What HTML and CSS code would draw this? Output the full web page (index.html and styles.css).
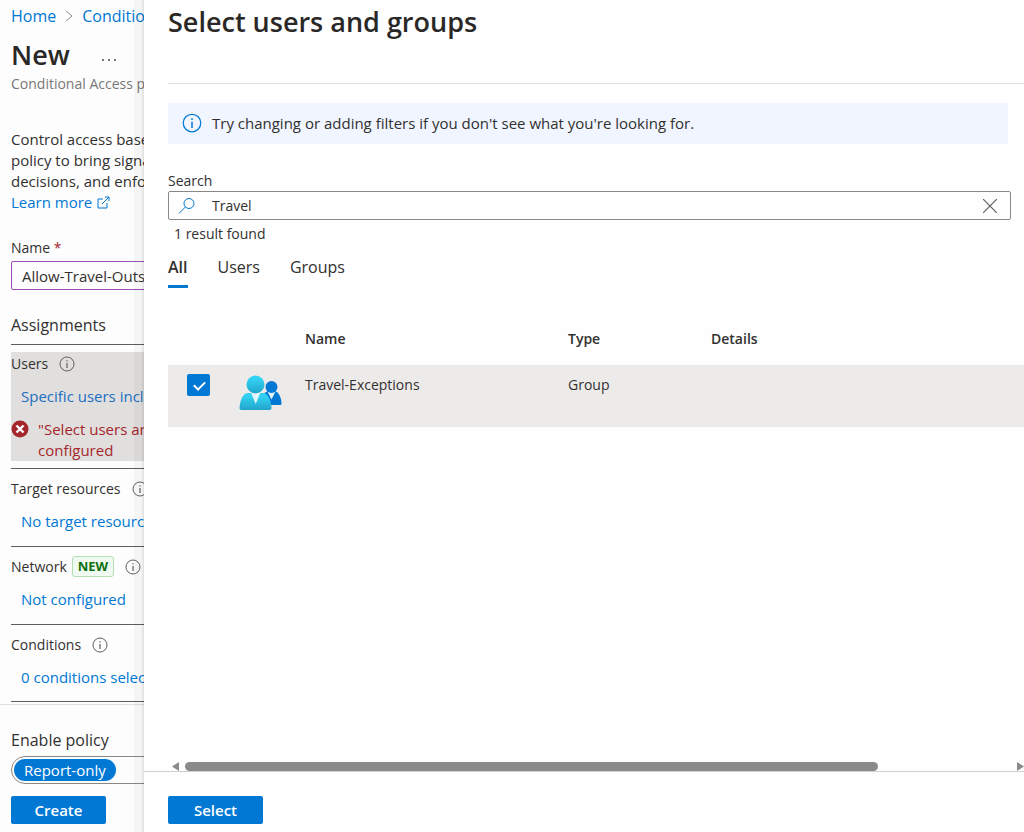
FILE: index.html
```html
<!DOCTYPE html>
<html lang="en">
<head>
    <meta charset="UTF-8">
    <meta name="viewport" content="width=device-width, initial-scale=1.0">
    <title>New - Conditional Access policy</title>
    <link rel="stylesheet" href="styles.css">
</head>
<body>
    <svg class="sprite" aria-hidden="true">
        <symbol id="info" viewBox="0 0 16 16">
            <circle cx="8" cy="8" r="7" fill="none" stroke="currentColor"/>
            <path d="M8 7v5M8 4.2v1.3" fill="none" stroke="currentColor" stroke-width="1.2"/>
        </symbol>
    </svg>

    <div class="policy">
        <div class="policy-body">
            <nav class="breadcrumb">
                <a href="#">Home</a>
                <svg width="8" height="12" viewBox="0 0 8 12"><path d="M1 1l6 5-6 5" fill="none" stroke="#8a8886"/></svg>
                <a href="#">Conditional Access</a>
            </nav>
            <div class="title-row">
                <h1>New</h1>
                <button class="more" type="button" aria-label="More">
                    <svg width="14" height="2" viewBox="0 0 14 2"><path d="M0 0h2v2H0zM6 0h2v2H6zM12 0h2v2h-2z" fill="#797775"/></svg>
                </button>
            </div>
            <p class="subtitle">Conditional Access policy</p>

            <p class="intro">Control access based on<br>policy to bring signals<br>decisions, and enforce<br>
                <a href="#">Learn more <svg width="13" height="13" viewBox="0 0 13 13"><path d="M6 3H1v9h9V7M8 1h4v4M12 1L5 8" fill="none" stroke="currentColor"/></svg></a>
            </p>

            <label for="policyName">Name <span class="required">*</span></label>
            <input class="name-input" type="text" id="policyName" value="Allow-Travel-Outside">

            <h2>Assignments</h2>
            <div class="section section-users">
                <div class="users-box">
                    <div class="section-label">Users <svg class="info"><use href="#info"/></svg></div>
                    <a href="#">Specific users included</a>
                    <div class="error">
                        <svg width="18" height="18" viewBox="0 0 18 18"><circle cx="9" cy="9" r="8.5" fill="#a4262c"/><path d="M5.5 5.5l7 7M12.5 5.5l-7 7" stroke="#fff" stroke-width="2.4"/></svg>
                        <p>"Select users and<br>configured</p>
                    </div>
                </div>
            </div>
            <div class="section">
                <div class="section-label">Target resources <svg class="info"><use href="#info"/></svg></div>
                <a href="#">No target resources</a>
            </div>
            <div class="section">
                <div class="section-label">Network <span class="badge">NEW</span> <svg class="info"><use href="#info"/></svg></div>
                <a href="#">Not configured</a>
            </div>
            <div class="section">
                <div class="section-label">Conditions <svg class="info"><use href="#info"/></svg></div>
                <a href="#">0 conditions selected</a>
            </div>
        </div>
        <div class="policy-footer">
            <div class="enable-label">Enable policy</div>
            <div class="toggle">
                <button type="button" class="active">Report-only</button>
            </div>
            <button class="primary" type="button">Create</button>
        </div>
    </div>

    <div class="panel">
        <div class="panel-body">
            <header><h1>Select users and groups</h1></header>
            <div class="message">
                <svg class="message-icon"><use href="#info"/></svg>
                <span>Try changing or adding filters if you don't see what you're looking for.</span>
            </div>

            <label for="search">Search</label>
            <div class="search-box">
                <svg width="18" height="18" viewBox="0 0 18 18"><circle cx="11" cy="6.5" r="5" fill="none" stroke="#0078d4"/><path d="M7.4 10L1 16.4" stroke="#0078d4"/></svg>
                <input type="text" id="search" value="Travel">
                <button type="button" aria-label="Clear">
                    <svg width="14" height="14" viewBox="0 0 14 14"><path d="M0 0l14 14M14 0L0 14" stroke="#605e5c" stroke-width="1.2"/></svg>
                </button>
            </div>
            <p class="result">1 result found</p>

            <div class="tabs" role="tablist">
                <button type="button" role="tab" aria-selected="true" class="active">All</button>
                <button type="button" role="tab" aria-selected="false">Users</button>
                <button type="button" role="tab" aria-selected="false">Groups</button>
            </div>

            <table>
                <thead>
                    <tr>
                        <th class="col-check"></th>
                        <th class="col-icon"></th>
                        <th class="col-name">Name</th>
                        <th class="col-type">Type</th>
                        <th>Details</th>
                    </tr>
                </thead>
                <tbody>
                    <tr>
                        <td class="col-check"><input type="checkbox" aria-label="Travel-Exceptions" checked></td>
                        <td>
                            <svg class="group-icon" width="44" height="36" viewBox="0 0 44 36">
                                <defs>
                                    <linearGradient id="head" x1="0" y1="0" x2="0" y2="1">
                                        <stop offset="0.2" stop-color="#32d0f2"/>
                                        <stop offset="1" stop-color="#22a5cb"/>
                                    </linearGradient>
                                </defs>
                                <path d="M24 30v-8c1-4 3-6 6-6h5c4 0 7 5 7.500 12 0 1.500-.5 2-1.500 2z" fill="#0078d4"/>
                                <path d="M28.500 16.500h8l-4 8z" fill="#e3f2fc"/>
                                <circle cx="32.500" cy="12" r="6" fill="#0078d4"/>
                                <path d="M2.500 35C1 35 .5 34.200.5 33 1 25 4 18 9 18h15c5 0 8 7 8.500 15 0 1.200-.8 2-2 2z" fill="url(#head)"/>
                                <path d="M12 17.500h9.500L16.700 29z" fill="#e3f7fd"/>
                                <circle cx="16.500" cy="9.500" r="9" fill="url(#head)"/>
                            </svg>
                        </td>
                        <td>Travel-Exceptions</td>
                        <td>Group</td>
                        <td></td>
                    </tr>
                </tbody>
            </table>
        </div>
        <div class="scrollbar">
            <svg width="7" height="9" viewBox="0 0 7 9"><path d="M7 0v9L0 4.500z" fill="#8a8a8a"/></svg>
            <div class="thumb"></div>
            <svg width="7" height="9" viewBox="0 0 7 9"><path d="M0 0v9l7-4.500z" fill="#8a8a8a"/></svg>
        </div>
        <div class="panel-footer">
            <button class="primary" type="button">Select</button>
        </div>
    </div>
</body>
</html>
```
FILE: styles.css
```css
* {
    box-sizing: border-box;
}
body {
    margin: 0;
    height: 100vh;
    display: flex;
    overflow: hidden;
    font-family: "Open Sans", "Noto Sans", sans-serif;
    font-size: 15px;
    line-height: 21px;
    color: #323130;
    background-color: #fdfdfd;
}
h1, h2, p {
    margin: 0;
}
h1 {
    font-size: 27px;
    line-height: 36px;
    font-weight: 600;
    color: #292827;
}
a {
    color: #0078d4;
    text-decoration: none;
}
label {
    display: block;
    font-size: 14px;
}
button, input {
    font: inherit;
    color: inherit;
}
button {
    padding: 0;
    border: none;
    background: none;
    cursor: pointer;
}
.sprite {
    display: none;
}
.primary {
    display: block;
    width: 95px;
    height: 28px;
    border-radius: 2px;
    background-color: #0078d4;
    color: #fff;
    font-weight: 600;
}

/* policy blade on the left, partly covered by the panel */
.policy {
    flex: 0 0 144px;
    display: flex;
    flex-direction: column;
    overflow: hidden;
    white-space: nowrap;
    position: relative;
}
.policy::after {
    content: "";
    position: absolute;
    top: 0;
    right: 0;
    bottom: 0;
    width: 10px;
    background: linear-gradient(to right, rgba(0,0,0,0.03) 70%, rgba(0,0,0,0.12));
}
.policy-body {
    flex: 1;
    width: 300px;
    padding: 5px 11px 0;
}
.breadcrumb {
    display: flex;
    align-items: center;
    gap: 9px;
    font-size: 16px;
    line-height: 22px;
}
.title-row {
    display: flex;
    align-items: center;
    gap: 32px;
    margin-top: 10px;
}
.more {
    line-height: 12px;
}
.subtitle {
    font-size: 14px;
    color: #797775;
}
.intro {
    margin: 35px 0 24px;
}
.intro svg {
    margin-left: 1px;
    vertical-align: -1px;
}
.required {
    color: #a4262c;
}
.name-input {
    display: block;
    width: 100%;
    height: 29px;
    margin-top: 3px;
    padding: 0 10px;
    border: 1px solid #9b4fb5;
    border-radius: 2px;
    background: none;
}
h2 {
    margin: 24px 0 8px;
    font-size: 16px;
    line-height: 22px;
    font-weight: 400;
}
.section {
    display: flex;
    flex-direction: column;
    gap: 12px;
    border-top: 1px solid #605e5c;
    padding: 9px 0 14px;
}
.section:last-child {
    border-bottom: 1px solid #605e5c;
    padding-bottom: 13px;
}
.section a {
    padding-left: 10px;
}
.section-label {
    display: flex;
    align-items: center;
    height: 21px;
    font-size: 14px;
}
.section-users {
    padding: 7px 0;
}
.users-box {
    display: flex;
    flex-direction: column;
    gap: 12px;
    padding-top: 1px;
    background-color: #e1dfdd;
}
.users-box a {
    color: #1b6ec2;
}
.info {
    width: 16px;
    height: 16px;
    margin-left: 11px;
    color: #605e5c;
}
.badge {
    margin-left: 5px;
    padding: 0 5px;
    border: 1px solid #b4deb4;
    border-radius: 3px;
    background-color: #f1faf1;
    color: #0e700e;
    font-size: 13px;
    line-height: 19px;
    font-weight: 700;
}
.error {
    display: flex;
    gap: 9px;
    color: #a4262c;
}
.error svg {
    margin-top: 1px;
}
.policy-footer {
    width: 300px;
    height: 128px;
    padding: 24px 11px 0;
    border-top: 1px solid #e1dfdd;
}
.enable-label {
    font-size: 16px;
    line-height: 22px;
}
.toggle {
    height: 28px;
    margin: 5px 0 12px;
    padding: 2px;
    border: 1px solid #8a8886;
    border-radius: 14px;
}
.toggle .active {
    display: block;
    height: 22px;
    padding: 0 10px;
    border-radius: 11px;
    background-color: #0078d4;
    color: #fff;
}

/* select users and groups */
.panel {
    flex: 1;
    min-width: 0;
    display: flex;
    flex-direction: column;
    background-color: #fefefe;
}
.panel-body {
    flex: 1;
    padding-left: 24px;
}
.panel header {
    height: 84px;
    padding-top: 4px;
    border-bottom: 1px solid #e1dfdd;
}
.message {
    display: flex;
    gap: 10px;
    height: 41px;
    margin: 19px 16px 26px 0;
    padding: 10px 0 0 14px;
    background-color: #f0f5ff;
}
.message-icon {
    width: 20px;
    height: 20px;
    color: #0078d4;
}
.search-box {
    display: flex;
    align-items: center;
    height: 29px;
    margin-right: 13px;
    padding: 0 13px 0 9px;
    border: 1px solid #8a8886;
    border-radius: 2px;
}
.search-box input {
    flex: 1;
    min-width: 0;
    height: 27px;
    padding: 0 16px;
    border: none;
    outline: none;
    background: none;
    font-size: 14px;
}
.search-box button {
    line-height: 12px;
}
.result {
    margin: 3px 0 10px 6px;
    font-size: 14px;
}
.tabs {
    display: flex;
    gap: 30px;
}
.tabs button {
    height: 34px;
    padding-bottom: 4px;
    border-bottom: 3px solid transparent;
    font-size: 16px;
}
.tabs .active {
    border-bottom-color: #0078d4;
    font-weight: 600;
}
table {
    width: 100%;
    margin-top: 26px;
    border-collapse: collapse;
    table-layout: fixed;
    font-size: 14px;
}
th {
    height: 51px;
    padding: 0 0 2px;
    text-align: left;
    font-weight: 600;
}
td {
    height: 62px;
    padding: 9px 0 0;
    vertical-align: top;
    background-color: #edebe9;
}
.col-check {
    width: 71px;
    padding-left: 19px;
}
.col-icon {
    width: 66px;
}
.col-name {
    width: 263px;
}
.col-type {
    width: 143px;
}
td input {
    appearance: none;
    display: block;
    width: 23px;
    height: 22px;
    margin: 0;
    border-radius: 2px;
    background-color: #0078d4;
    position: relative;
}
td input:checked::after {
    content: "";
    position: absolute;
    left: 7px;
    top: 7px;
    width: 9px;
    height: 5px;
    border: solid #fff;
    border-width: 0 0 2px 2px;
    transform: rotate(-45deg);
}
.group-icon {
    display: block;
    margin-top: 1px;
}
.scrollbar {
    display: flex;
    align-items: center;
    height: 9px;
    padding-left: 28px;
}
.thumb {
    flex: 1;
    height: 9px;
    margin: 0 139px 0 6px;
    border-radius: 5px;
    background-color: #8a8a8a;
}
.panel-footer {
    height: 61px;
    padding: 24px 24px 0;
    border-top: 1px solid #d2d0ce;
}
```
